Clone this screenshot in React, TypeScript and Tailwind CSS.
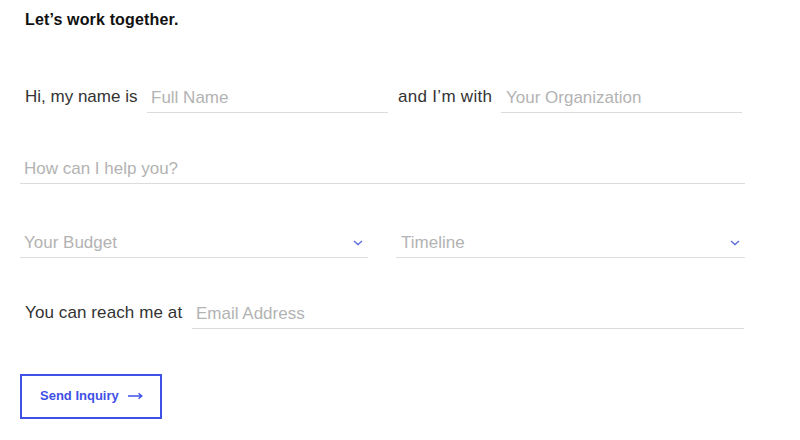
import React from "react";

const font = { fontFamily: '"Liberation Sans", Arial, sans-serif' };

function Chevron() {
  return (
    <svg width="10" height="6" viewBox="0 0 10 6" fill="none" className="shrink-0">
      <path d="M1 1l4 3.6L9 1" stroke="#5b6bdc" strokeWidth="1.3" />
    </svg>
  );
}

function Arrow() {
  return (
    <svg width="15" height="8" viewBox="0 0 15 8" fill="none" className="shrink-0">
      <path d="M0 4h13.5M10.5 1.2L13.8 4l-3.3 2.8" stroke="#3f51e6" strokeWidth="1.4" />
    </svg>
  );
}

function Field({ placeholder, className }: { placeholder: string; className: string }) {
  return (
    <input
      placeholder={placeholder}
      className={`h-[30px] border-b border-[#dcdcdc] bg-transparent pt-[1px] text-[17px] text-[#333] outline-none placeholder:text-[#b3b3b3] ${className}`}
    />
  );
}

export default function App() {
  return (
    <div className="h-[440px] w-[800px] bg-white pl-[20px]" style={font}>
      <h1 className="pl-[5px] pt-[10px] text-[16px] font-bold leading-[20px] tracking-[0.15px] text-[#111]">
        Let’s work together.
      </h1>

      <div className="mt-[53px] flex h-[30px] items-end">
        <span className="w-[118px] whitespace-nowrap pb-[6px] pl-[5px] text-[17px] leading-[20px] text-[#333]">Hi, my name is</span>
        <Field placeholder="Full Name" className="ml-[9px] w-[241px] pl-[4px]" />
        <span className="ml-[10px] w-[94px] whitespace-nowrap pb-[6px] text-[17px] leading-[20px] tracking-[0.3px] text-[#333]">and I’m with</span>
        <Field placeholder="Your Organization" className="ml-[9px] w-[241px] pl-[5px]" />
      </div>

      <div className="mt-[41px] flex">
        <Field placeholder="How can I help you?" className="w-[725px] pl-[4px]" />
      </div>

      <div className="mt-[44px] flex gap-[28px]">
        <div className="flex h-[30px] w-[348px] items-center justify-between border-b border-[#dcdcdc] pl-[4px] pr-[5px] pt-[1px]">
          <span className="text-[17px] text-[#b3b3b3]">Your Budget</span>
          <Chevron />
        </div>
        <div className="flex h-[30px] w-[349px] items-center justify-between border-b border-[#dcdcdc] pl-[5px] pr-[5px] pt-[1px]">
          <span className="text-[17px] text-[#b3b3b3]">Timeline</span>
          <Chevron />
        </div>
      </div>

      <div className="mt-[41px] flex h-[30px] items-end">
        <span className="w-[162px] whitespace-nowrap pb-[6px] pl-[5px] text-[17px] leading-[20px] tracking-[0.1px] text-[#333]">You can reach me at</span>
        <Field placeholder="Email Address" className="ml-[10px] w-[552px] pl-[4px]" />
      </div>

      <button className="mt-[45px] flex h-[45px] w-[142px] items-center gap-[9px] border-2 border-[#3f51e6] pb-[1px] pl-[18px] text-[13px] font-bold text-[#3f51e6]">
        <span>Send Inquiry</span>
        <Arrow />
      </button>
    </div>
  );
}
